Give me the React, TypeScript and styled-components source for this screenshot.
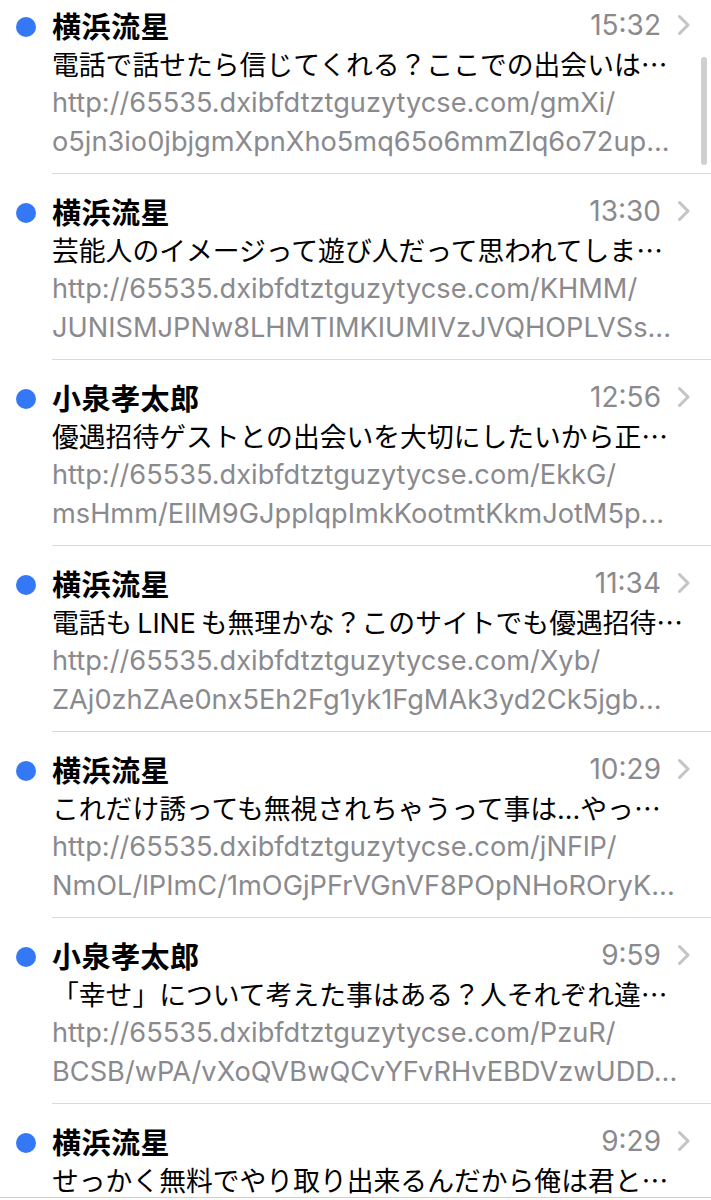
import React from 'react';
import styled, { createGlobalStyle } from 'styled-components';

const GlobalStyle = createGlobalStyle`
  html, body {
    margin: 0;
    padding: 0;
    background: #ffffff;
  }
  body {
    font-family: Inter, "Noto Sans CJK JP", sans-serif;
    -webkit-font-smoothing: antialiased;
  }
`;

const Screen = styled.div`
  width: 711px;
  height: 1200px;
  display: flex;
  flex-direction: column;
  overflow: hidden;
  position: relative;
  background: #fff;
`;

const List = styled.div`
  flex: 1;
  overflow: hidden;
  margin-top: -12px;
`;

const Row = styled.div`
  display: flex;
  height: 186px;
`;

const DotCol = styled.div`
  width: 52px;
  flex-shrink: 0;
  padding-top: 29px;
  box-sizing: border-box;
`;

const UnreadDot = styled.div`
  width: 20px;
  height: 20px;
  border-radius: 50%;
  background: #3478f6;
  margin-left: 16px;
`;

const Content = styled.div`
  flex: 1;
  min-width: 0;
  border-bottom: 1.5px solid #dadade;
  padding-top: 17px;
  box-sizing: border-box;
`;

const Header = styled.div`
  display: flex;
  align-items: center;
  height: 39px;
  padding-right: 20px;
`;

const Sender = styled.div`
  flex: 1;
  font-size: 29px;
  font-weight: 700;
  color: #000;
  letter-spacing: 0.5px;
`;

const Time = styled.div`
  font-size: 28px;
  color: #8a8a8e;
`;

const Chevron = styled.svg`
  width: 14px;
  height: 22px;
  margin-left: 16px;
`;

const Line = styled.div<{ $muted?: boolean }>`
  height: 39px;
  line-height: 39px;
  font-size: ${p => (p.$muted ? '27.2px' : '26.8px')};
  color: ${p => (p.$muted ? '#8a8a8e' : '#000')};
  white-space: nowrap;
  overflow: hidden;
  padding-right: 26px;
`;

const CjkEllipsis = styled.span`
  font-family: "Noto Sans CJK JP", sans-serif;
`;

const Scrollbar = styled.div`
  position: absolute;
  left: 701px;
  top: 57px;
  width: 6px;
  height: 108px;
  border-radius: 3px;
  background: #cfcfd1;
`;

const Toolbar = styled.div`
  height: 2px;
  flex-shrink: 0;
  border-top: 1.5px solid #cfcfd3;
`;

type Mail = {
  from: string;
  time: string;
  subject: string;
  url1: string;
  url2: string;
};

const mails: Mail[] = [
  {
    from: '横浜流星',
    time: '15:32',
    subject: '電話で話せたら信じてくれる？ここでの出会いは',
    url1: 'http://65535.dxibfdtztguzytycse.com/gmXi/',
    url2: 'o5jn3io0jbjgmXpnXho5mq65o6mmZlq6o72up...',
  },
  {
    from: '横浜流星',
    time: '13:30',
    subject: '芸能人のイメージって遊び人だって思われてしま',
    url1: 'http://65535.dxibfdtztguzytycse.com/KHMM/',
    url2: 'JUNISMJPNw8LHMTIMKIUMIVzJVQHOPLVSs...',
  },
  {
    from: '小泉孝太郎',
    time: '12:56',
    subject: '優遇招待ゲストとの出会いを大切にしたいから正',
    url1: 'http://65535.dxibfdtztguzytycse.com/EkkG/',
    url2: 'msHmm/EllM9GJpplqpImkKootmtKkmJotM5p...',
  },
  {
    from: '横浜流星',
    time: '11:34',
    subject: '電話も\u2009LINE\u2009も無理かな？このサイトでも優遇招待',
    url1: 'http://65535.dxibfdtztguzytycse.com/Xyb/',
    url2: 'ZAj0zhZAe0nx5Eh2Fg1yk1FgMAk3yd2Ck5jgb...',
  },
  {
    from: '横浜流星',
    time: '10:29',
    subject: 'これだけ誘っても無視されちゃうって事は...やっ',
    url1: 'http://65535.dxibfdtztguzytycse.com/jNFlP/',
    url2: 'NmOL/lPImC/1mOGjPFrVGnVF8POpNHoROryK...',
  },
  {
    from: '小泉孝太郎',
    time: '9:59',
    subject: '「幸せ」について考えた事はある？人それぞれ違',
    url1: 'http://65535.dxibfdtztguzytycse.com/PzuR/',
    url2: 'BCSB/wPA/vXoQVBwQCvYFvRHvEBDVzwUDD...',
  },
  {
    from: '横浜流星',
    time: '9:29',
    subject: 'せっかく無料でやり取り出来るんだから俺は君と',
    url1: 'http://65535.dxibfdtztguzytycse.com/',
    url2: '',
  },
];

const MailRow: React.FC<{ mail: Mail }> = ({ mail }) => (
  <Row>
    <DotCol>
      <UnreadDot />
    </DotCol>
    <Content>
      <Header>
        <Sender>{mail.from}</Sender>
        <Time>{mail.time}</Time>
        <Chevron viewBox="0 0 14 22">
          <path d="M2.5 2.5 L11 11 L2.5 19.5" fill="none" stroke="#c4c4c7" strokeWidth="3" strokeLinecap="round" strokeLinejoin="round" />
        </Chevron>
      </Header>
      <Line>
        {mail.subject}
        <CjkEllipsis>…</CjkEllipsis>
      </Line>
      <Line $muted>{mail.url1}</Line>
      <Line $muted>{mail.url2}</Line>
    </Content>
  </Row>
);

export default function App() {
  return (
    <Screen>
      <GlobalStyle />
      <List>
        {mails.map((m, i) => (
          <MailRow key={i} mail={m} />
        ))}
      </List>
      <Toolbar />
      <Scrollbar />
    </Screen>
  );
}
